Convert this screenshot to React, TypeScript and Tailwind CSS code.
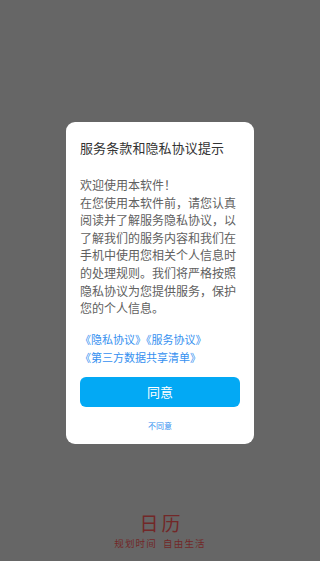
import React from "react";

export default function App() {
  const font = { fontFamily: '"Noto Sans CJK SC", "Noto Sans", sans-serif' };
  return (
    <div className="w-full h-[561px] bg-[#666666] flex flex-col items-center overflow-hidden" style={font}>
      <div className="mt-[122px] w-[188px] h-[322px] bg-white rounded-[9px] px-[14px] flex flex-col">
        <div className="pt-[16px] text-[13px] leading-[20px] text-[#333333] tracking-[0.1px]">服务条款和隐私协议提示</div>
        <div className="mt-[18px] text-[12px] leading-[17.6px] text-[#606060]">
          <div>欢迎使用本软件！</div>
          <div>在您使用本软件前，请您认真阅读并了解服务隐私协议，以了解我们的服务内容和我们在手机中使用您相关个人信息时的处理规则。我们将严格按照隐私协议为您提供服务，保护您的个人信息。</div>
        </div>
        <div className="mt-[13px] text-[11px] leading-[18px] text-[#3590f0]">
          <div>《隐私协议》《服务协议》</div>
          <div>《第三方数据共享清单》</div>
        </div>
        <div className="mt-[11px] h-[30px] w-full rounded-[6px] bg-[#03a9f4] flex items-center justify-center text-white text-[13px]">同意</div>
        <div className="mt-[14px] text-center text-[8px] leading-[10px] text-[#3590f0]">不同意</div>
      </div>
      <div className="mt-auto mb-[12px] flex flex-col items-center">
        <div className="text-[19px] leading-[22px] text-[#722828] tracking-[3px] pl-[3px]">日历</div>
        <div className="mt-[3px] flex text-[9.5px] leading-[12px] text-[#722828] tracking-[1.2px]">
          <span>规划时间</span>
          <span className="ml-[6px]">自由生活</span>
        </div>
      </div>
    </div>
  );
}
